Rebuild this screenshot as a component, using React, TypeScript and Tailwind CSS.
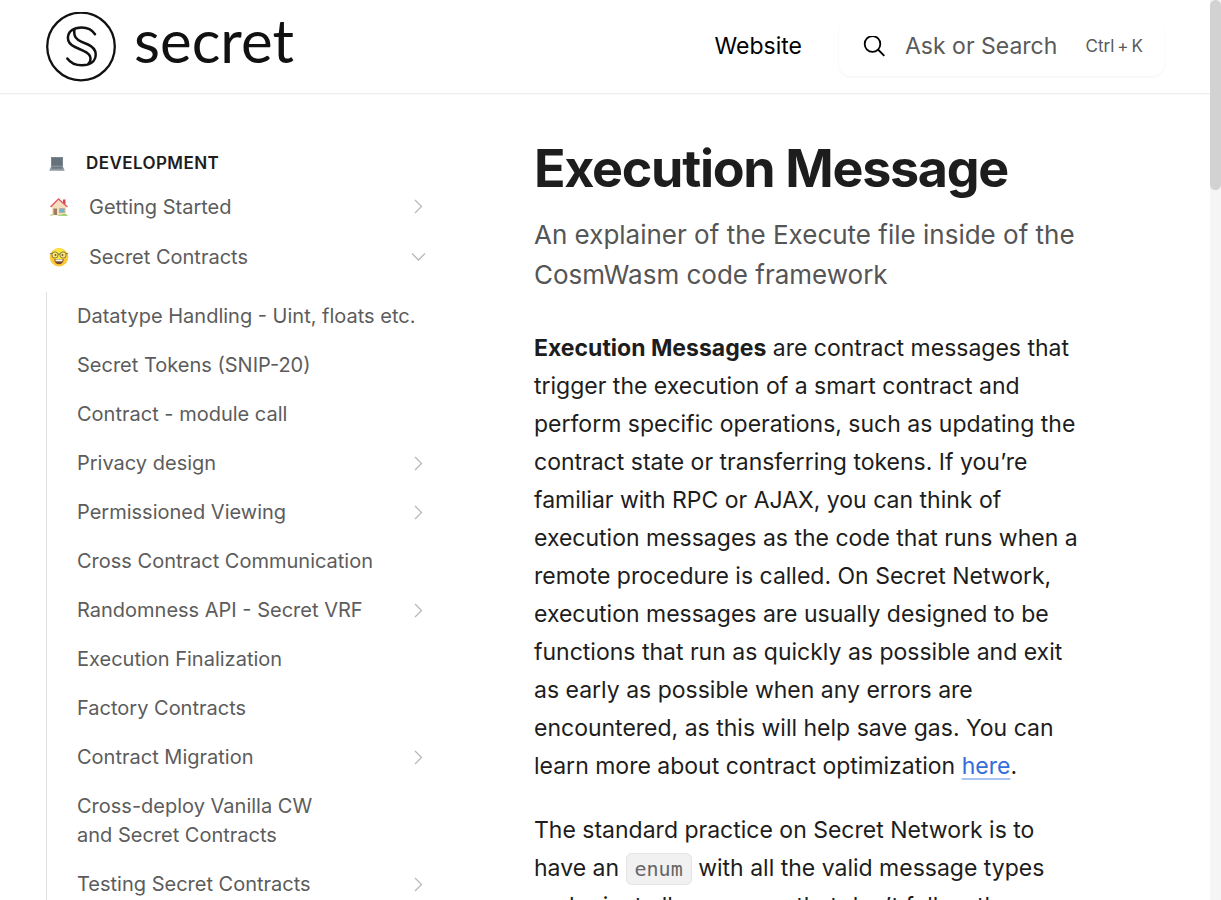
type Page = { title: string; nested?: boolean; wrap?: string };

const pages: Page[] = [
  { title: "Datatype Handling - Uint, floats etc." },
  { title: "Secret Tokens (SNIP-20)" },
  { title: "Contract - module call" },
  { title: "Privacy design", nested: true },
  { title: "Permissioned Viewing", nested: true },
  { title: "Cross Contract Communication" },
  { title: "Randomness API - Secret VRF", nested: true },
  { title: "Execution Finalization" },
  { title: "Factory Contracts" },
  { title: "Contract Migration", nested: true },
  { title: "Cross-deploy Vanilla CW", wrap: "and Secret Contracts" },
  { title: "Testing Secret Contracts", nested: true },
];

function Logo() {
  return (
    <a href="#home" className="flex shrink-0 items-center gap-[18px] text-[#111]">
      <svg viewBox="0 0 70 70" className="size-[70px]" fill="none" stroke="currentColor" strokeLinecap="round" aria-hidden="true">
        <circle cx="35" cy="34.5" r="33.8" strokeWidth="2.3" />
        <path
          strokeWidth="2.5"
          d="M49 22.3C46 17.8 41 15.6 35.700 15.600C27.500 15.600 21.900 19.500 21.900 26C21.900 31 24.500 33 29 35L37.500 38.800C42.500 41 44.500 43 44.500 46.500C44.500 49 43.500 51 42.300 51.800M28.300 17.500C27.600 24.500 30 27.300 35.700 29.800L42 32.500C47.500 35 49.700 38 49.700 42.300C49.700 49.500 44 53.300 36 53.300C29.500 53.300 24.500 51 21.300 46.500"
        />
      </svg>
      <span className="pb-[14px] font-['Lato',sans-serif] text-[60px] leading-[66px]">secret</span>
    </a>
  );
}

function Chevron({ open = false }: { open?: boolean }) {
  return (
    <svg viewBox="0 0 24 24" className="size-6 shrink-0 text-[#b8b8b8]" fill="none" stroke="currentColor" strokeWidth="1.3" aria-hidden="true">
      <path d={open ? "M6 8.500L12.500 15L19 8.500" : "M9 5L15.500 11.500L9 18"} />
    </svg>
  );
}

function Laptop() {
  return (
    <svg viewBox="0 0 16 16" className="size-4" aria-hidden="true">
      <path d="M2 1H14V11H2Z" fill="#7b8790" />
      <path d="M3 2H13V9.500H3Z" fill="#65727b" />
      <path d="M2 10.500H14L15.500 14H.5Z" fill="#919ba1" />
      <path d="M3 11.200H13L13.500 12.400H2.500Z" fill="#606b73" />
      <path d="M.5 14H15.500V15H.5Z" fill="#a9b1b5" />
    </svg>
  );
}

function House() {
  return (
    <svg viewBox="0 0 20 20" className="size-5" aria-hidden="true">
      <path d="M14 2.500H16.500V7H14Z" fill="#c94a52" />
      <path d="M3 9L10 3L17 9V18H3Z" fill="#f3dfbd" />
      <path d="M1.500 10L9.500 2L18.500 10" fill="none" stroke="#ea5661" strokeWidth="1.500" />
      <path d="M4.500 11.500H8V18H4.500Z" fill="#a07a65" />
      <path d="M10.500 11.500H15.500V15.500H10.500Z" fill="#6fb5cd" stroke="#c3a480" strokeWidth=".7" />
      <path d="M1 18.500C2 17 3 17.500 4 18.500H8C10 17.500 11 17.500 12 17.800C14 17 17 16.800 19 18.700Z" fill="#80c341" />
    </svg>
  );
}

function NerdFace() {
  return (
    <svg viewBox="0 0 20 20" className="size-5" aria-hidden="true">
      <circle cx="10" cy="10.300" r="9.200" fill="#fbc838" />
      <circle cx="10" cy="7.500" r="6.300" fill="#fde93e" />
      <circle cx="6" cy="8" r="3.100" fill="#fbe86c" stroke="#6a654a" strokeWidth=".8" />
      <circle cx="14" cy="8" r="3.100" fill="#fbe86c" stroke="#6a654a" strokeWidth=".8" />
      <path d="M.8 6.500L3 6.800M9 7.200Q10 6.500 11 7.200M17 6.800L19.200 6.500" stroke="#6a654a" strokeWidth=".8" fill="none" />
      <circle cx="6.500" cy="8" r=".9" fill="#6b5230" />
      <circle cx="13.500" cy="8" r=".9" fill="#6b5230" />
      <path d="M5.200 12.300H14.800C14.400 15.800 12.600 17.200 10 17.200S5.600 15.800 5.200 12.300Z" fill="#7a4a2a" />
      <path d="M6.500 12.500H13.500V14.300H6.500Z" fill="#fff" />
    </svg>
  );
}

export default function App() {
  return (
    <div className="flex h-screen overflow-hidden bg-white font-['Inter',sans-serif] text-[#1d1d1d]">
      <div className="flex min-w-0 grow flex-col">
        <header className="flex h-[94px] shrink-0 items-center justify-between border-b border-[#f0f0f0] px-[46px] shadow-[0_1px_1px_#f9f9f9]">
          <Logo />
          <div className="flex items-center gap-[37px]">
            <a href="#website" className="text-[23px] text-black">Website</a>
            <button type="button" className="flex h-[58px] w-[325px] items-center rounded-xl bg-white pr-[21px] pl-6 text-[#5a5a5a] shadow-[0_1px_3px_#0000000d]">
              <svg viewBox="0 0 22 22" className="mr-5 size-[22px] text-black" fill="none" stroke="currentColor" strokeWidth="1.800" aria-hidden="true">
                <circle cx="9.500" cy="8" r="7.800" />
                <path d="M15 13.500L21.300 19.800" />
              </svg>
              <span className="grow text-left text-[23px]">Ask or Search</span>
              <kbd className="flex gap-[3px] font-['Inter',sans-serif] text-[17px]">
                <span>Ctrl</span>
                <span>+</span>
                <span>K</span>
              </kbd>
            </button>
          </div>
        </header>
        <div className="flex min-h-0 grow">
          <nav aria-label="Table of contents" className="w-[430px] shrink-0 overflow-hidden pt-[55px] pl-[46px] text-xl text-[#5c5c5c]">
            <h2 className="flex h-[29px] items-center text-[17px] font-semibold tracking-wide text-[#1d1d1d]">
              <span className="w-10 pl-[3px]"><Laptop /></span>
              DEVELOPMENT
            </h2>
            <a href="#start" className="flex h-[50px] items-center pt-2">
              <span className="w-[43px] pl-[3px]"><House /></span>
              <span className="grow">Getting Started</span>
              <Chevron />
            </a>
            <a href="#contracts" className="flex h-[50px] items-center pt-2">
              <span className="w-[43px] pl-[3px]"><NerdFace /></span>
              <span className="grow">Secret Contracts</span>
              <Chevron open />
            </a>
            <ul className="mt-[14px] border-l border-[#e0e0e0]">
              {pages.map((p) => (
                <li key={p.title}>
                  <a href="#page" className="flex items-center py-[10px] pl-[30px] leading-[29px]">
                    <span className="grow whitespace-nowrap">
                      {p.title}
                      {p.wrap && <span className="block">{p.wrap}</span>}
                    </span>
                    {p.nested && <Chevron />}
                  </a>
                </li>
              ))}
            </ul>
          </nav>
          <main className="min-w-0 grow overflow-hidden pt-[46px] pr-[130px] pl-[104px]">
            <h1 className="text-[52px] leading-[58px] font-bold tracking-tight">Execution Message</h1>
            <p className="mt-[17px] text-[26px] leading-10 text-[#555]">
              An explainer of the Execute file inside of the CosmWasm code framework
            </p>
            <p className="mt-[34px] text-[23px] leading-[38px]">
              <strong className="font-bold">Execution Messages</strong> are contract messages that trigger the execution of a smart contract and perform specific operations, such as updating the contract state or transferring tokens. If you’re familiar with RPC or AJAX, you can think of execution messages as the code that runs when a remote procedure is called. On Secret Network, execution messages are usually designed to be functions that run as quickly as possible and exit as early as possible when any errors are encountered, as this will help save gas. You can learn more about contract optimization{" "}
              <a href="#here" className="text-[#346ddb] underline decoration-[#aac4f2] decoration-2 underline-offset-4">here</a>.
            </p>
            <p className="mt-[26px] text-[23px] leading-[38px]">
              The standard practice on Secret Network is to have an{" "}
              <code className="rounded-md border border-[#e4e4e4] bg-[#f1f1f1] px-2 py-[3px] font-['DejaVu_Sans_Mono',monospace] text-xl text-[#666]">enum</code>{" "}
              with all the valid message types and reject all messages that don’t follow the
            </p>
          </main>
        </div>
      </div>
      <div aria-hidden="true" className="w-[11px] shrink-0 bg-[#f5f5f5]">
        <div className="h-[190px] rounded-full bg-[#d2d2d2]" />
      </div>
    </div>
  );
}
